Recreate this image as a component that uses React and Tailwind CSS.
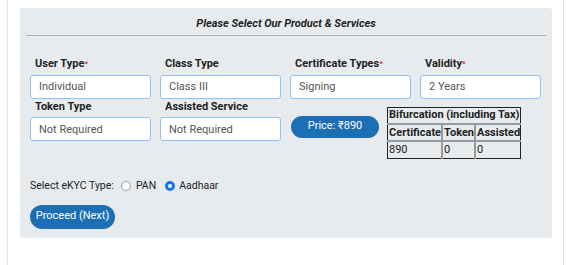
import React, { useState } from 'react';

function Field({ label, required, value, first }) {
  return (
    <div className="w-[121px] shrink-0">
      <label className={`block font-bold text-[11px] leading-[13px] text-[#222] pl-[5px] mb-[3px] ${first ? 'mt-[21px]' : 'mt-[2px]'}`}>
        {label}
        {required && <span className="text-[#e0343c] align-top text-[8px]">*</span>}
      </label>
      <input
        readOnly
        value={value}
        className="w-full h-[24px] bg-white border border-[#8fc0f7] rounded-[3px] px-[8px] text-[11px] text-[#555] outline-none"
      />
    </div>
  );
}

export default function App() {
  const [kyc, setKyc] = useState('aadhaar');

  return (
    <div className="min-h-screen bg-white" style={{ fontFamily: 'Roboto, "Noto Sans", sans-serif' }}>
      <div className="ml-[7px] mr-[2px] h-[265px] border-x border-[#e3e3e3] pt-[8px] pl-[12px] pr-[11px]">
        <div className="bg-[#e8ebee] rounded-[3px] h-[230px] px-[6px]">
          {/* Header */}
          <div className="h-[28px] border-b border-[#aeb1b4] flex items-end justify-center pb-[4px]">
            <h2 className="text-[11px] leading-[14px] font-bold italic text-[#222]">Please Select Our Product &amp; Services</h2>
          </div>

          {/* Form */}
          <div className="px-[4px]">
            <div className="flex gap-[9px]">
              <Field first label="User Type" required value="Individual" />
              <Field first label="Class Type" value="Class III" />
              <Field first label="Certificate Types" required value="Signing" />
              <Field first label="Validity" required value="2 Years" />
            </div>

            <div className="flex gap-[9px] -mt-[1px]">
              <Field label="Token Type" value="Not Required" />
              <Field label="Assisted Service" value="Not Required" />
              <div className="flex items-start">
                <button className="mt-[18px] w-[88px] h-[22px] rounded-full bg-[#1c6fb5] text-white text-[11px] ml-[1px]">
                  Price: ₹890
                </button>
                <table className="mt-[9px] ml-[8px] border-collapse border border-[#222] text-[11px] text-[#222] leading-[14px] w-[133px]">
                  <tbody>
                    <tr>
                      <th colSpan={3} className="border-b-2 border-[#999] font-bold text-left pl-[1px] pr-0 h-[17px] whitespace-nowrap">
                        Bifurcation (including Tax)
                      </th>
                    </tr>
                    <tr className="whitespace-nowrap">
                      <th className="border-2 border-[#999] border-l-0 font-bold text-left pl-[1px] pr-0 h-[17px] w-[56px]">Certificate</th>
                      <th className="border-2 border-[#999] font-bold text-left pl-[1px] pr-0 w-[31px]">Token</th>
                      <th className="border-b-2 border-[#999] font-bold text-left pl-[1px] pr-0">Assisted</th>
                    </tr>
                    <tr>
                      <td className="border-r-2 border-[#999] pl-[1px] h-[17px]">890</td>
                      <td className="border-r-2 border-[#999] pl-[1px]">0</td>
                      <td className="pl-[1px]">0</td>
                    </tr>
                  </tbody>
                </table>
              </div>
            </div>

            {/* eKYC */}
            <div className="flex items-center mt-[20px] text-[10.5px] text-[#222] h-[14px]">
              <span>Select eKYC Type:</span>
              <label className="flex items-center ml-[7px]">
                <span
                  onClick={() => setKyc('pan')}
                  className={`w-[10px] h-[10px] rounded-full ${kyc === 'pan' ? 'border-[3px] border-[#1a73e8] bg-white' : 'border border-[#9a9a9a] bg-white'}`}
                />
                <span className="ml-[5px]">PAN</span>
              </label>
              <label className="flex items-center ml-[9px]">
                <span
                  onClick={() => setKyc('aadhaar')}
                  className={`w-[10px] h-[10px] rounded-full ${kyc === 'aadhaar' ? 'border-[3px] border-[#1a73e8] bg-white' : 'border border-[#9a9a9a] bg-white'}`}
                />
                <span className="ml-[4px]">Aadhaar</span>
              </label>
            </div>

            <button className="mt-[12px] w-[85px] h-[24px] rounded-full bg-[#1c6fb5] text-white text-[11px]">
              Proceed (Next)
            </button>
          </div>
        </div>
      </div>
    </div>
  );
}
